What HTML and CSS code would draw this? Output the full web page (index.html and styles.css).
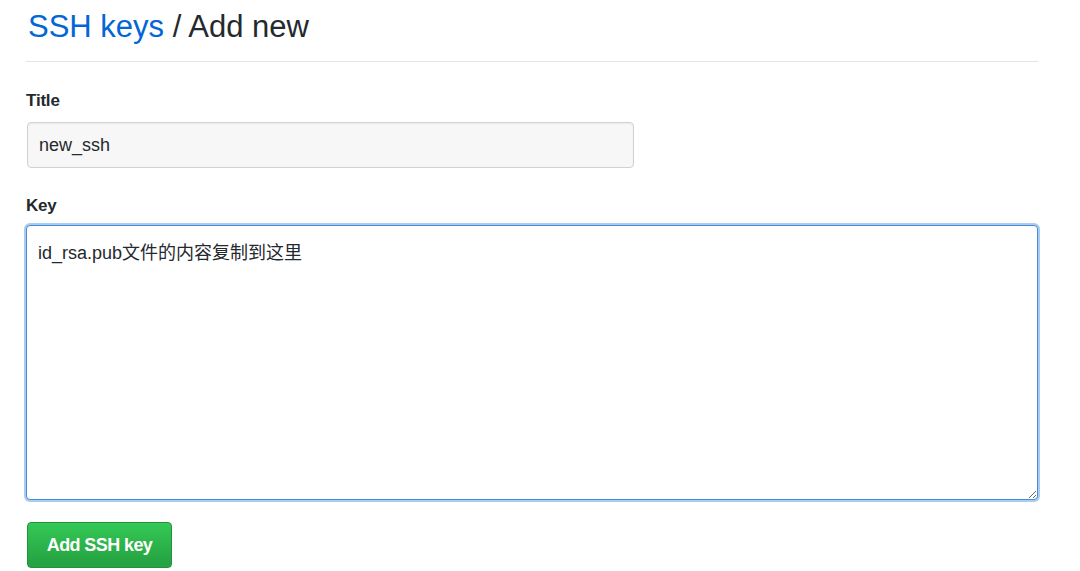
FILE: index.html
```html
<!DOCTYPE html>
<html lang="zh-CN">
<head>
    <meta charset="UTF-8">
    <meta name="viewport" content="width=device-width, initial-scale=1.0">
    <title>SSH keys / Add new</title>
    <link rel="stylesheet" href="styles.css">
</head>
<body>
    <div class="container">
        <h1 class="subhead"><a href="#" class="subhead-link">SSH keys</a> / Add new</h1>

        <form class="key-form">
            <label class="form-label" for="title">Title</label>
            <input type="text" id="title" class="form-input" value="new_ssh">

            <label class="form-label" for="key">Key</label>
            <textarea id="key" class="form-textarea">id_rsa.pub文件的内容复制到这里</textarea>

            <button type="button" class="btn-primary">Add SSH key</button>
        </form>
    </div>
</body>
</html>
```

FILE: styles.css
```css
body {
    margin: 0;
    padding: 0;
    background: #fff;
    color: #24292e;
    font-family: "Liberation Sans", Arial, "Noto Sans CJK SC", sans-serif;
}
.container {
    width: 1012px;
    padding: 8px 0 0 26px;
}
.subhead {
    margin: 0;
    padding: 0 0 15px 2px;
    font-size: 31px;
    font-weight: normal;
    line-height: 38px;
    border-bottom: 1px solid #e4e4e4;
}
.subhead-link {
    color: #0366d6;
    text-decoration: none;
}
.key-form {
    display: flex;
    flex-direction: column;
    align-items: flex-start;
    padding-top: 27px;
}
.form-label {
    display: block;
    font-size: 17px;
    font-weight: bold;
    line-height: 24px;
    letter-spacing: -0.2px;
    margin-bottom: 9px;
}
.form-input {
    box-sizing: border-box;
    width: 607px;
    height: 46px;
    margin: 0 0 26px 1px;
    padding: 0 11px;
    font-family: "Liberation Sans", Arial, sans-serif;
    font-size: 18px;
    color: #24292e;
    background: #f7f7f7;
    border: 1px solid #d1d1d1;
    border-radius: 4px;
    box-shadow: inset 0 1px 2px rgba(0, 0, 0, 0.06);
    outline: none;
}
.form-textarea {
    box-sizing: border-box;
    width: 1012px;
    height: 275px;
    margin: -2px 0 22px 0;
    padding: 14px 11px 12px;
    font-family: "Liberation Sans", Arial, "Noto Sans CJK SC", sans-serif;
    font-size: 18px;
    line-height: 27px;
    color: #24292e;
    background: #fff;
    border: 1px solid #4a8bd6;
    border-radius: 4px;
    box-shadow: 0 0 0 2px #aaccf2;
    outline: none;
}
.btn-primary {
    box-sizing: border-box;
    width: 145px;
    height: 46px;
    margin-left: 1px;
    padding: 0;
    font-family: "Liberation Sans", Arial, sans-serif;
    font-size: 18px;
    font-weight: bold;
    letter-spacing: -0.6px;
    color: #fff;
    background-image: linear-gradient(-180deg, #34c955 0%, #26a342 90%);
    border: 1px solid #24913c;
    border-radius: 4px;
    cursor: pointer;
}
```
